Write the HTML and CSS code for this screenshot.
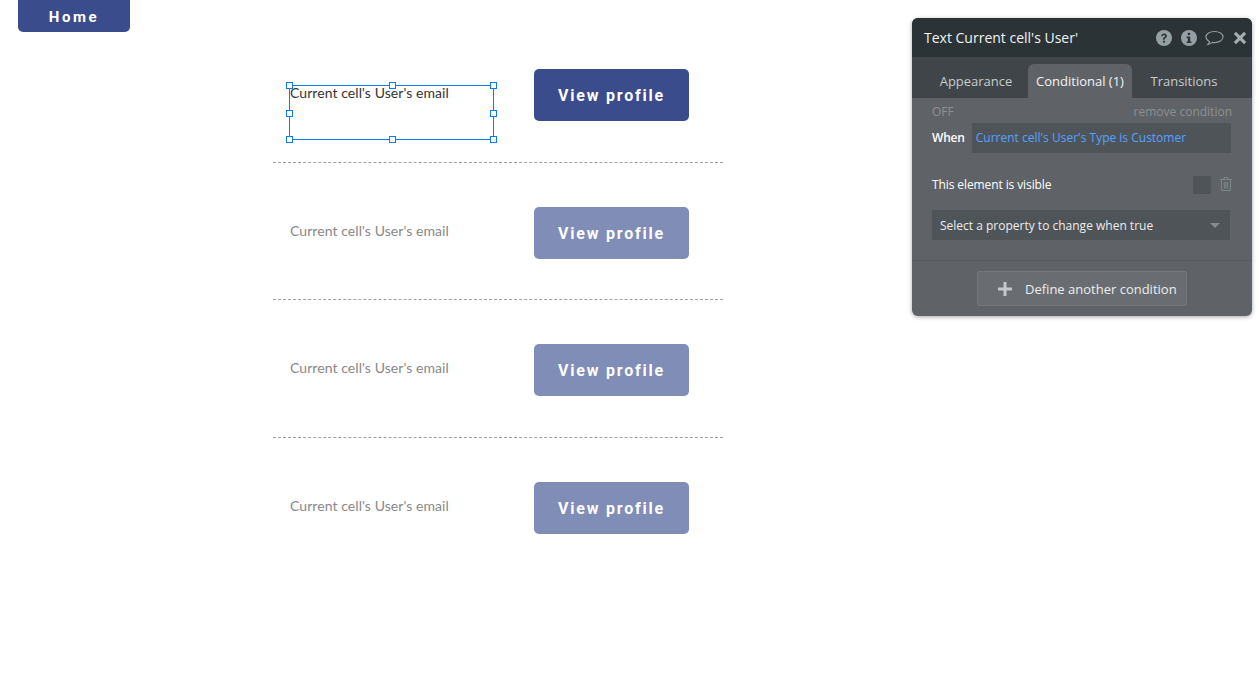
FILE: index.html
```html
<!DOCTYPE html>
<html lang="en">
<head>
<meta charset="utf-8">
<title>Users</title>
<link rel="stylesheet" href="styles.css">
</head>
<body>
<a class="home-btn">Home</a>
<main class="list">
  <div class="row">
    <div class="cell-text selected">
      <span>Current cell's User's email</span>
      <i class="handle h-tl"></i><i class="handle h-tc"></i><i class="handle h-tr"></i>
      <i class="handle h-ml"></i><i class="handle h-mr"></i>
      <i class="handle h-bl"></i><i class="handle h-bc"></i><i class="handle h-br"></i>
    </div>
    <a class="profile-btn">View profile</a>
  </div>
  <div class="row faded">
    <div class="cell-text"><span>Current cell's User's email</span></div>
    <a class="profile-btn">View profile</a>
  </div>
  <div class="row faded">
    <div class="cell-text"><span>Current cell's User's email</span></div>
    <a class="profile-btn">View profile</a>
  </div>
  <div class="row faded last">
    <div class="cell-text"><span>Current cell's User's email</span></div>
    <a class="profile-btn">View profile</a>
  </div>
</main>
<aside class="panel">
  <header class="panel-head">
    <h2 class="panel-title">Text Current cell's User'</h2>
    <div class="panel-icons">
      <svg class="icon-help" width="16" height="16" viewBox="0 0 16 16"><circle cx="8" cy="8" r="8" fill="#94a0a3"/><path d="M5.200 6.200C5.300 4.500 6.500 3.500 8.100 3.500c1.600 0 2.800 1 2.800 2.400 0 1.200-.7 1.700-1.400 2.200-.5.400-.8.700-.8 1.300v.3H7v-.5c0-1 .5-1.600 1.100-2 .5-.4.900-.7.900-1.200 0-.5-.4-.9-1-.9-.6 0-1 .4-1.100 1.100z" fill="#2c3336"/><rect x="7" y="10.800" width="1.900" height="1.900" fill="#2c3336"/></svg>
      <svg width="16" height="16" viewBox="0 0 16 16"><circle cx="8" cy="8" r="8" fill="#94a0a3"/><rect x="6.800" y="2.800" width="2.400" height="2.300" fill="#2c3336"/><path d="M5.600 6.500h3.600v5h1.200v1.600H5.600v-1.600h1.200V8.100H5.600z" fill="#2c3336"/></svg>
      <svg width="19" height="16" viewBox="0 0 19 16"><path d="M9.500 1.500c4.600 0 8.500 2.300 8.500 5.600s-3.900 5.500-8.500 5.500c-.8 0-1.500-.1-2.200-.2-1.200 1-2.600 1.700-4.300 2.100.8-.8 1.300-1.700 1.500-2.800C2.200 10.500 1 8.900 1 7.100c0-3.300 3.900-5.600 8.500-5.600z" fill="none" stroke="#94a0a3" stroke-width="1.100"/></svg>
      <svg class="icon-close" width="14" height="14" viewBox="0 0 14 14"><path d="M3 .8l4 4 4-4 2.200 2.200-4 4 4 4L11 13.200l-4-4-4 4L.8 11l4-4-4-4z" fill="#a4aeb1"/></svg>
    </div>
  </header>
  <nav class="tabs">
    <span class="tab">Appearance</span>
    <span class="tab active">Conditional (1)</span>
    <span class="tab">Transitions</span>
  </nav>
  <section class="cond">
    <div class="cond-top">
      <span class="off">OFF</span>
      <span class="remove">remove condition</span>
    </div>
    <div class="when-row">
      <span class="when-label">When</span>
      <span class="when-field">Current cell's User's Type is Customer</span>
    </div>
    <div class="visible-row">
      <span class="visible-label">This element is visible</span>
      <span class="check"></span>
      <svg class="trash" width="14" height="16" viewBox="0 0 14 16"><path d="M1 3.500h12M5 3.300V1.500h4v1.800M2.500 3.500v11h9v-11M5.300 6v6.500M7 6v6.500M8.700 6v6.500" fill="none" stroke="#7d8487" stroke-width="1"/></svg>
    </div>
    <div class="select">
      <span>Select a property to change when true</span>
      <i class="caret"></i>
    </div>
  </section>
  <footer class="panel-foot">
    <a class="define-btn">
      <svg width="16" height="16" viewBox="0 0 16 16"><path d="M6.500 1h3v5.500H15v3H9.500V15h-3V9.500H1v-3h5.500z" fill="#c4c8ca"/></svg>
      <span>Define another condition</span>
    </a>
  </footer>
</aside>
</body>
</html>
```
FILE: styles.css
```css
* { box-sizing: border-box; }
html, body { margin: 0; height: 100%; background: #fff; overflow: hidden; }
body { position: relative; font-family: "Open Sans", sans-serif; }

.home-btn {
  display: flex; align-items: center; justify-content: center;
  width: 112px; height: 32px; margin-left: 18px; padding-top: 2px;
  background: #3b4c8c; border-radius: 0 0 5px 5px;
  color: #fff; font: 700 15px Roboto, sans-serif; letter-spacing: 2.600px;
}

.list { width: 450px; margin: -6.750px 0 0 273px; }
.row {
  display: flex; align-items: flex-start;
  height: 137.500px; padding: 44px 0 0 16px;
  border-bottom: 1px dashed #a0a0a0;
}
.row.last { border-bottom: 0; }
.cell-text {
  position: relative; width: 205px; height: 55px; margin-top: 16px; margin-right: 40px;
  font: 400 14px/16px Lato, sans-serif; letter-spacing: .07px; color: #333;
  border: 1px solid transparent;
}
.cell-text span { display: block; margin-top: -1px; }
.cell-text.selected { border-color: #0f7bf2; }
.faded .cell-text { color: #888; }
.profile-btn {
  display: flex; align-items: center; justify-content: center;
  width: 155px; height: 52px; padding-top: 1px; background: #3b4c8c; border-radius: 5px;
  color: #fff; font: 700 16px Roboto, sans-serif; letter-spacing: 1.800px;
}
.faded .profile-btn { background: #808db7; }

.handle { position: absolute; width: 7px; height: 7px; background: #fff; border: 1px solid #0f7bf2; }
.h-tl { left: -4px; top: -4px; }
.h-tc { left: 99px; top: -4px; }
.h-tr { right: -4px; top: -4px; }
.h-ml { left: -4px; top: 24px; }
.h-mr { right: -4px; top: 24px; }
.h-bl { left: -4px; bottom: -4px; }
.h-bc { left: 99px; bottom: -4px; }
.h-br { right: -4px; bottom: -4px; }

.panel {
  position: absolute; left: 912px; top: 18px; width: 340px; height: 298px;
  background: #5f6367; border-radius: 6px; overflow: hidden;
  box-shadow: 0 1px 4px rgba(0,0,0,.35);
  color: #fff;
}
.panel-head {
  display: flex; align-items: center; justify-content: space-between;
  height: 39px; padding: 0 5px 0 12px; background: #2c3336;
}
.panel-title { margin: 0; font: 400 14px "Open Sans", sans-serif; color: #f2f3f3; }
.panel-icons { display: flex; align-items: center; gap: 8px; }
.icon-help { margin-right: 1px; }
.icon-close { margin-left: 1px; }
.tabs {
  display: flex; height: 41px; padding: 7px 0 0 13px; background: #3f4548;
  font-size: 13px;
}
.tab { display: flex; align-items: center; justify-content: center; height: 34px; color: #c8cbcc; }
.tab:nth-child(1) { width: 103px; padding-right: 1px; }
.tab:nth-child(2) { width: 104px; }
.tab:nth-child(3) { width: 104px; }
.tab.active { background: #5f6367; border-radius: 6px 6px 0 0; color: #f2f3f3; }

.cond { padding: 6px 20px 0; height: 163px; border-bottom: 1px solid #565a5e; }
.cond-top { display: flex; justify-content: space-between; font-size: 12px; line-height: 16px; color: #8c9093; }
.when-row { display: flex; align-items: stretch; gap: 7px; margin-top: 3px; height: 30px; font-size: 12px; line-height: 29px; }
.when-label { color: #fff; font-weight: 600; letter-spacing: -.2px; }
.when-field { width: 259px; padding-left: 4px; background: #4f5458; color: #56a2ff; }
.visible-row { display: flex; align-items: center; margin-top: 21px; height: 20px; font-size: 12px; }
.visible-label { flex: 1; letter-spacing: -.1px; }
.check { width: 18px; height: 18px; background: #4f5458; margin: 1px 8px 0 0; }
.trash { margin-right: -1px; }
.select {
  display: flex; align-items: center; justify-content: space-between;
  width: 298px; height: 30px; margin-top: 16px; padding: 0 10px 0 8px;
  background: #4f5458; font-size: 12px; color: #eceded;
}
.caret { width: 0; height: 0; border: 5px solid transparent; border-top-color: #868b8e; border-bottom: 0; }
.panel-foot { display: flex; justify-content: center; padding-top: 10px; }
.define-btn {
  display: flex; align-items: center; gap: 12px;
  width: 210px; height: 35px; padding-left: 19px;
  background: #696d71; border: 1px solid #73777b; border-radius: 2px;
  font-size: 13px; color: #eceded;
}
```
